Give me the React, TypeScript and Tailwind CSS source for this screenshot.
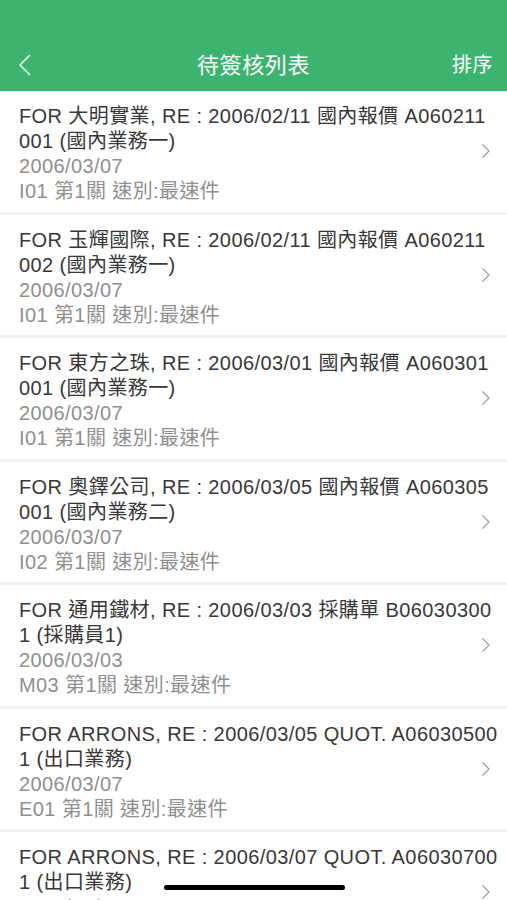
interface Item {
  lines: [string, string];
  date: string;
  meta: string;
}

const items: Item[] = [
  { lines: ["FOR 大明實業, RE : 2006/02/11 國內報價 A060211", "001 (國內業務一)"], date: "2006/03/07", meta: "I01 第1關 速別:最速件" },
  { lines: ["FOR 玉輝國際, RE : 2006/02/11 國內報價 A060211", "002 (國內業務一)"], date: "2006/03/07", meta: "I01 第1關 速別:最速件" },
  { lines: ["FOR 東方之珠, RE : 2006/03/01 國內報價 A060301", "001 (國內業務一)"], date: "2006/03/07", meta: "I01 第1關 速別:最速件" },
  { lines: ["FOR 奧鐸公司, RE : 2006/03/05 國內報價 A060305", "001 (國內業務二)"], date: "2006/03/07", meta: "I02 第1關 速別:最速件" },
  { lines: ["FOR 通用鐵材, RE : 2006/03/03 採購單 B06030300", "1 (採購員1)"], date: "2006/03/03", meta: "M03 第1關 速別:最速件" },
  { lines: ["FOR ARRONS, RE : 2006/03/05 QUOT. A06030500", "1 (出口業務)"], date: "2006/03/07", meta: "E01 第1關 速別:最速件" },
  { lines: ["FOR ARRONS, RE : 2006/03/07 QUOT. A06030700", "1 (出口業務)"], date: "2006/03/07", meta: "E01 第1關 速別:最速件" },
];

function Chevron() {
  return (
    <svg width="10" height="16" viewBox="0 0 10 16" fill="none">
      <path d="M1.5 1.5 L8 8 L1.5 14.5" stroke="#a0a0a0" strokeWidth="1.3" />
    </svg>
  );
}

function Row({ item }: { item: Item }) {
  return (
    <div className="relative flex items-center bg-white pl-[19px] pr-[16px] pt-[13px] pb-[7.5px] border-b-[3px] border-[#f2f2f2]">
      <div className="flex-1 text-[20px] leading-[25px] tracking-[0.4px] whitespace-nowrap">
        <div className="text-[#383838]">{item.lines[0]}</div>
        <div className="text-[#383838]">{item.lines[1]}</div>
        <div className="text-[#8f8f8f]">{item.date}</div>
        <div className="text-[#8f8f8f]">{item.meta}</div>
      </div>
      <div className="absolute right-[16px] top-1/2 -translate-y-1/2">
        <Chevron />
      </div>
    </div>
  );
}

export default function App() {
  return (
    <div
      className="relative h-[900px] w-[507px] overflow-hidden bg-white"
      style={{ fontFamily: '"Liberation Sans", "Noto Sans CJK TC", sans-serif' }}
    >
      <div className="relative flex h-[91px] items-end bg-[#3db370] pl-[17px] pr-[14px] pb-[11px] text-white">
        <div className="flex w-full items-center justify-between">
          <svg width="16" height="24" viewBox="0 0 16 24" fill="none">
            <path d="M13 2 L3 12 L13 22" stroke="#e6f5ec" strokeWidth="1.6" />
          </svg>
          <div className="text-[20px] tracking-[0.5px]">排序</div>
        </div>
        <div className="pointer-events-none absolute bottom-[9px] left-0 right-0 text-center text-[22px] tracking-[0.6px]">
          待簽核列表
        </div>
      </div>
      <div className="flex flex-col">
        {items.map((it, i) => (
          <Row key={i} item={it} />
        ))}
      </div>
      <div className="absolute bottom-[10px] left-[164px] h-[5px] w-[181px] rounded-full bg-black" />
    </div>
  );
}
